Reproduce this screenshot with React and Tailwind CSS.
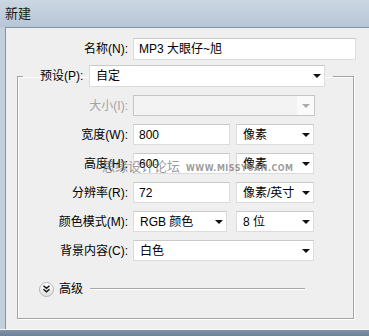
import React from "react";

function Arrow({ disabled }) {
  return (
    <svg width="8" height="4" viewBox="0 0 8 4" className="shrink-0">
      <path d="M0 0H8L4 4Z" fill={disabled ? "#ababab" : "#111"} />
    </svg>
  );
}

function Select({ className, text }) {
  return (
    <div className={`h-[21px] flex items-center justify-between bg-white border border-[#dcdcdc] border-t-[#c9c9c9] pl-[6px] pr-[3px] ${className}`}>
      <span className="leading-none">{text}</span>
      <Arrow />
    </div>
  );
}

function Input({ className, text }) {
  return (
    <div className={`h-[21px] flex items-center bg-white border border-[#dcdcdc] border-t-[#c9c9c9] pl-[5px] ${className}`}>
      <span className="leading-none">{text}</span>
    </div>
  );
}

function Label({ children, disabled }) {
  return (
    <div className={`w-[115px] shrink-0 text-right pr-[5px] leading-none ${disabled ? "text-[#a3a3a3]" : "text-black"}`}>
      {children}
    </div>
  );
}

export default function App() {
  return (
    <div className="relative w-[369px] h-[336px] overflow-hidden flex flex-col bg-[#b3c2d2] font-['Liberation_Sans','Noto_Sans_CJK_SC',sans-serif] text-[12px] text-black">
      <div className="h-[27px] shrink-0 flex items-center pl-[5px] bg-gradient-to-b from-[#cbd7e3] to-[#b7c6d6] text-[13px] text-[#1a1a1a]">
        新建
      </div>
      <div className="flex-1 flex pl-[5px] bg-gradient-to-r from-[#c2cfdc] to-[#aebfcf]">
        <div className="flex-1 flex flex-col border-l border-t border-[#8495a8] bg-[#efefef]">
          <div className="flex items-center pt-[10px]">
            <div className="w-[127px] text-right pr-[5px] leading-none">名称(N):</div>
            <Input className="w-[223px] h-[22px]" text="MP3 大眼仔~旭" />
          </div>
          <fieldset className="ml-[11px] mt-[5px] w-[337px] border border-[#a4a4a4] shadow-[1px_1px_0_#ffffff,inset_1px_1px_0_#ffffff] px-0 pb-[22px]">
            <legend className="ml-[5px] pl-[17px] pr-[8px] flex items-center">
              <div className="w-[44px] leading-none">预设(P):</div>
              <Select className="ml-[5px] w-[236px] h-[22px]" text="自定" />
            </legend>
            <div className="flex flex-col gap-[8px] pt-[8px]">
              <div className="flex items-center">
                <Label disabled>大小(I):</Label>
                <div className="w-[182px] h-[21px] flex items-center justify-end bg-[#f3f3f3] border border-[#c6c6c6]">
                  <div className="w-[17px] h-full flex items-center justify-center bg-[#fafafa]">
                    <Arrow disabled />
                  </div>
                </div>
              </div>
              <div className="flex items-center">
                <Label>宽度(W):</Label>
                <Input className="w-[97px]" text="800" />
                <Select className="ml-[6px] w-[78px]" text="像素" />
              </div>
              <div className="flex items-center">
                <Label>高度(H):</Label>
                <Input className="w-[97px]" text="600" />
                <Select className="ml-[6px] w-[78px]" text="像素" />
              </div>
              <div className="flex items-center">
                <Label>分辨率(R):</Label>
                <Input className="w-[97px]" text="72" />
                <Select className="ml-[6px] w-[78px]" text="像素/英寸" />
              </div>
              <div className="flex items-center">
                <Label>颜色模式(M):</Label>
                <Select className="w-[94px]" text="RGB 颜色" />
                <Select className="ml-[9px] w-[78px]" text="8 位" />
              </div>
              <div className="flex items-center">
                <Label>背景内容(C):</Label>
                <Select className="w-[181px]" text="白色" />
              </div>
            </div>
            <div className="flex items-center mt-[21px] ml-[21px] h-[14px]">
              <div className="w-[15px] h-[15px] rounded-full border border-[#b4b4b4] bg-gradient-to-b from-[#ffffff] to-[#dedede] flex items-center justify-center">
                <svg width="7" height="8" viewBox="0 0 7 8">
                  <path d="M0.5 0.8L3.5 3.3L6.5 0.8M0.5 4.3L3.5 6.8L6.5 4.3" fill="none" stroke="#111" strokeWidth="1.4" />
                </svg>
              </div>
              <div className="ml-[5px] leading-none">高级</div>
              <div className="ml-[7px] w-[215px] h-[2px] border-t border-[#a8a8a8] border-b border-b-white" />
            </div>
          </fieldset>
        </div>
      </div>
      <div className="h-[7px] shrink-0 border-t border-[#fafafa] bg-gradient-to-b from-[#8193a8] to-[#6e8197]" />
      <div className="absolute left-[102px] top-[160px] flex items-end gap-[6px] pointer-events-none">
        <span className="text-[13px] leading-none text-[#6f6f6f]/70">思缘设计论坛</span>
        <span className="text-[8px] leading-none font-bold text-[#6f6f6f]/70 tracking-[0.5px] font-['DejaVu_Sans',sans-serif]">WWW.MISSYUAN.COM</span>
      </div>
    </div>
  );
}
